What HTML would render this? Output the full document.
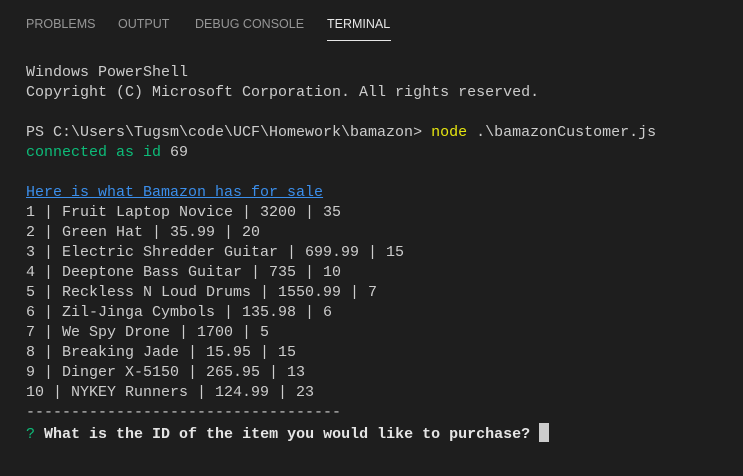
<!DOCTYPE html>
<html><head><style>
body{margin:0;width:743px;height:476px;background:#1e1e1e;overflow:hidden;position:relative;font-family:"Liberation Sans",sans-serif}
.tab{position:absolute;top:17px;font-size:12.5px;color:#969696;letter-spacing:0}
.term{position:absolute;left:26px;top:63px;font-family:"Liberation Mono",monospace;font-size:15px;line-height:20px;color:#cccccc;white-space:pre}
.g{color:#23d18b}.g2{color:#0dbc79}.y{color:#e5e510}.b{color:#3b8eea;text-decoration:underline}
.bold{font-weight:bold;color:#e5e5e5}
.cur{display:inline-block;width:10px;height:19px;background:#cccccc;vertical-align:-4px}
</style></head><body>
<div class="tab" style="left:26px">PROBLEMS</div>
<div class="tab" style="left:118px">OUTPUT</div>
<div class="tab" style="left:195px">DEBUG CONSOLE</div>
<div class="tab" style="left:327px;color:#e7e7e7">TERMINAL</div>
<div style="position:absolute;left:327px;top:40px;width:64px;height:1px;background:#e7e7e7"></div>
<div class="term">Windows PowerShell
Copyright (C) Microsoft Corporation. All rights reserved.

PS C:\Users\Tugsm\code\UCF\Homework\bamazon> <span class="y">node</span> .\bamazonCustomer.js
<span class="g2">connected as id</span> 69

<span class="b">Here is what Bamazon has for sale</span>
1 | Fruit Laptop Novice | 3200 | 35
2 | Green Hat | 35.99 | 20
3 | Electric Shredder Guitar | 699.99 | 15
4 | Deeptone Bass Guitar | 735 | 10
5 | Reckless N Loud Drums | 1550.99 | 7
6 | Zil-Jinga Cymbols | 135.98 | 6
7 | We Spy Drone | 1700 | 5
8 | Breaking Jade | 15.95 | 15
9 | Dinger X-5150 | 265.95 | 13
10 | NYKEY Runners | 124.99 | 23
-----------------------------------
<span class="g2">?</span> <span class="bold">What is the ID of the item you would like to purchase?</span> <span class="cur"></span></div>
</body></html>
